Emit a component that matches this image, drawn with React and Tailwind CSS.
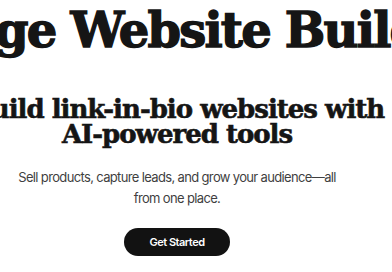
import React from 'react';

function App() {
  return (
    <div className="w-[392px] h-[272px] overflow-hidden bg-white">
      <div className="w-[354px] flex flex-col items-center text-center">
        <h1 className="mr-[48px] whitespace-nowrap text-[48px] leading-[60px] font-bold text-[#151515] font-['DejaVu_Serif',serif] tracking-[-1.8px] [-webkit-text-stroke:1.4px_#151515]">
          Bio Page Website Builder
        </h1>
        <h2 className="mt-[37px] flex flex-col items-center text-[26px] leading-[25px] font-bold text-[#151515] font-['DejaVu_Serif',serif] tracking-[-1px] [-webkit-text-stroke:0.6px_#151515]">
          <span className="whitespace-nowrap">Build link-in-bio websites with</span>
          <span className="whitespace-nowrap">AI-powered tools</span>
        </h2>
        <p className="mt-[20px] text-[13px] leading-[21px] text-[#3f3f3f] font-['Inter',sans-serif] tracking-[-0.65px] whitespace-nowrap">
          Sell products, capture leads, and grow your audience—all
          <br />
          from one place.
        </p>
        <button className="mt-[19px] w-[106px] h-[28px] rounded-full bg-[#121212] text-white text-[11px] font-semibold font-['Inter',sans-serif] tracking-[-0.5px]">
          Get Started
        </button>
      </div>
    </div>
  );
}

export default App;
